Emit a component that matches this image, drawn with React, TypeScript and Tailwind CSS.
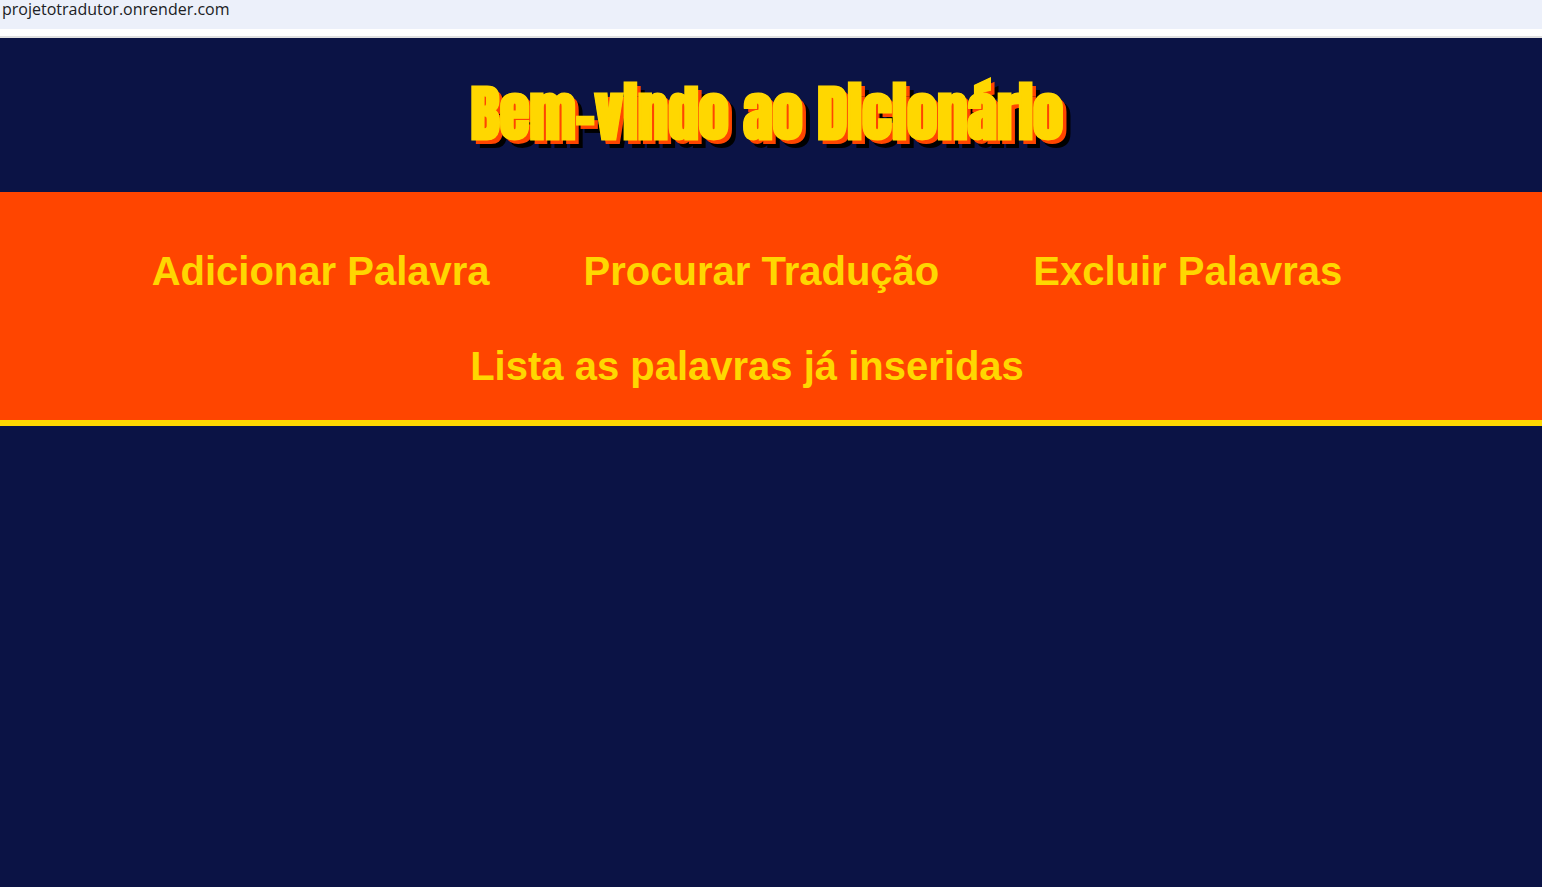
const links = [
  { label: 'Adicionar Palavra', href: '#adicionar' },
  { label: 'Procurar Tradução', href: '#procurar' },
  { label: 'Excluir Palavras', href: '#excluir' },
  { label: 'Lista as palavras já inseridas', href: '#lista' },
];

function AddressBar() {
  return (
    <div className="border-b-2 border-[#e0e0e0] bg-white pb-[7px]">
      <div className="h-[29px] bg-[#ecf0fa] pl-[2px] font-['Open_Sans','Noto_Sans',sans-serif] text-[16px] leading-[18px] text-[#202124]">
        projetotradutor.onrender.com
      </div>
    </div>
  );
}

export default function App() {
  return (
    <div className="flex min-h-screen flex-col bg-[#0b1345] font-['Liberation_Sans',Arial,sans-serif]">
      <AddressBar />
      <header className="px-5 pt-[35px] pb-[39px] text-center">
        <h1 className="pr-2 font-['Impact','Anton','Roboto_Condensed',sans-serif] text-[61px] leading-[80px] font-black text-[#ffd700] [-webkit-text-stroke:1px_#ffd700] [text-shadow:4px_4px_0_#ff4500,8px_8px_0_#000]">
          Bem-vindo ao Dicionário
        </h1>
      </header>
      <nav className="border-b-6 border-[#ffd700] bg-[#ff4500] pt-[55px] pr-12 pb-[30px]">
        <ul className="flex flex-wrap justify-center gap-x-[94px] gap-y-[47px]">
          {links.map((link) => (
            <li key={link.href}>
              <a href={link.href} className="block text-[40px] leading-[48px] font-bold text-[#ffd700]">
                {link.label}
              </a>
            </li>
          ))}
        </ul>
      </nav>
      <main className="flex-1" />
    </div>
  );
}
